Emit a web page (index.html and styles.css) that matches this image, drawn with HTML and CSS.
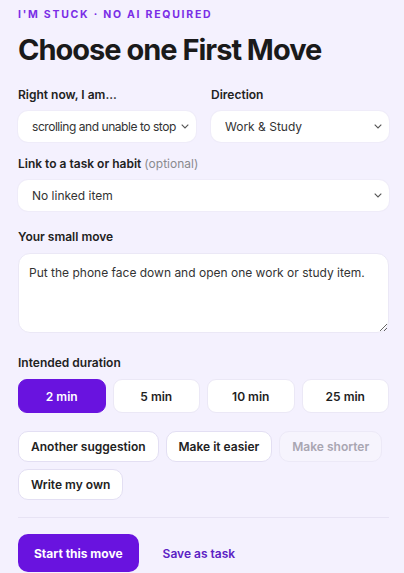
FILE: index.html
```html
<!DOCTYPE html>
<html lang="en">
<head>
    <meta charset="UTF-8">
    <meta name="viewport" content="width=device-width, initial-scale=1.0">
    <title>First Move</title>
    <link rel="stylesheet" href="styles.css">
</head>
<body>

    <div class="page">
        <p class="eyebrow">I'M STUCK · NO AI REQUIRED</p>
        <h1>Choose one First Move</h1>

        <!-- State and direction -->
        <div class="row-two">
            <div class="field">
                <label for="state">Right now, I am...</label>
                <select id="state" class="select tight">
                    <option>scrolling and unable to stop</option>
                </select>
            </div>
            <div class="field">
                <label for="direction">Direction</label>
                <select id="direction" class="select">
                    <option>Work &amp; Study</option>
                </select>
            </div>
        </div>

        <div class="field link-field">
            <label for="linked">Link to a task or habit <span class="optional">(optional)</span></label>
            <select id="linked" class="select">
                <option>No linked item</option>
            </select>
        </div>

        <div class="field move-field">
            <label for="move">Your small move</label>
            <textarea id="move">Put the phone face down and open one work or study item.</textarea>
        </div>

        <div class="field duration-field">
            <label>Intended duration</label>
            <div class="durations">
                <button class="chip active">2 min</button>
                <button class="chip">5 min</button>
                <button class="chip">10 min</button>
                <button class="chip">25 min</button>
            </div>
        </div>

        <!-- Tweak the suggestion -->
        <div class="actions">
            <button class="pill">Another suggestion</button>
            <button class="pill">Make it easier</button>
            <button class="pill" disabled>Make shorter</button>
            <button class="pill">Write my own</button>
        </div>

        <div class="footer">
            <button class="primary">Start this move</button>
            <a class="link" href="#">Save as task</a>
        </div>
    </div>

</body>
</html>
```

FILE: styles.css
```css
body {
    font-family: 'Inter', 'Noto Sans', sans-serif;
    margin: 0;
    padding: 0;
    background-color: #f4f1fe;
    color: #1c1c1e;
}

.page {
    padding: 8px 15px 0 18px;
}

.eyebrow {
    margin: 0;
    font-size: 10.5px;
    line-height: 14px;
    font-weight: 700;
    letter-spacing: 1.75px;
    color: #7a2ee6;
}

h1 {
    margin: 10px 0 0;
    font-size: 29px;
    line-height: 36px;
    font-weight: 700;
    letter-spacing: -1px;
    color: #1a1a1a;
}

label {
    display: block;
    font-size: 12px;
    line-height: 18px;
    font-weight: 600;
    color: #222;
    margin-bottom: 7px;
}

.optional {
    font-weight: 400;
    color: #8a8a8e;
}

.row-two {
    display: grid;
    grid-template-columns: 178px 1fr;
    gap: 15px;
    margin-top: 18px;
}

.link-field {
    margin-top: 13px;
}

.move-field {
    margin-top: 17px;
}

.duration-field {
    margin-top: 21px;
}

.select {
    display: block;
    width: 100%;
    height: 31px;
    padding: 0 24px 0 14px;
    border: none;
    border-radius: 10px;
    background-color: #fff;
    background-image: url("data:image/svg+xml,%3Csvg xmlns='http://www.w3.org/2000/svg' width='8' height='5' viewBox='0 0 8 5'%3E%3Cpath d='M0.7 0.7L4 4L7.3 0.7' fill='none' stroke='%23555' stroke-width='1.1'/%3E%3C/svg%3E");
    background-repeat: no-repeat;
    background-position: right 7px center;
    font-family: inherit;
    font-size: 12px;
    color: #333;
    appearance: none;
    -webkit-appearance: none;
    box-shadow: 0 0 0 1px #efecf9;
}

/* Long option text sits close to the chevron */
.select.tight {
    padding-left: 14px;
    padding-right: 12px;
    letter-spacing: -0.45px;
}

textarea {
    display: block;
    width: 100%;
    height: 80px;
    box-sizing: border-box;
    padding: 10px 10px;
    border: 1px solid #ebe8f6;
    border-radius: 12px;
    background-color: #fff;
    font-family: inherit;
    font-size: 12px;
    line-height: 18px;
    color: #333;
    resize: vertical;
}

.durations {
    display: grid;
    grid-template-columns: repeat(4, 1fr);
    gap: 7px;
}

.chip {
    height: 34px;
    border: 1px solid #ebe8f6;
    border-radius: 9px;
    background-color: #fff;
    font-family: inherit;
    font-size: 12px;
    font-weight: 600;
    color: #1e1e1e;
    cursor: pointer;
}

/* Selected duration */
.chip.active {
    background-color: #6913df;
    border-color: #6913df;
    color: #fff;
}

.actions {
    display: flex;
    flex-wrap: wrap;
    gap: 7px;
    margin-top: 18px;
    padding-bottom: 17px;
    border-bottom: 1px solid #e7e3f4;
}

.pill {
    height: 31px;
    padding: 0 12px;
    border: 1px solid #e3dff3;
    border-radius: 10px;
    background-color: #fff;
    font-family: inherit;
    font-size: 12px;
    font-weight: 600;
    color: #222;
    cursor: pointer;
}

.pill:disabled {
    background-color: #f6f4fd;
    border-color: #ece9f7;
    color: #a9a6b2;
    cursor: default;
}

.footer {
    display: flex;
    align-items: center;
    gap: 24px;
    margin-top: 16px;
}

.primary {
    height: 38px;
    padding: 0 16px;
    border: none;
    border-radius: 10px;
    background-color: #6913df;
    color: #fff;
    font-family: inherit;
    font-size: 12px;
    font-weight: 700;
    cursor: pointer;
}

.link {
    color: #5c22c4;
    font-size: 12px;
    font-weight: 600;
    text-decoration: none;
}
```
